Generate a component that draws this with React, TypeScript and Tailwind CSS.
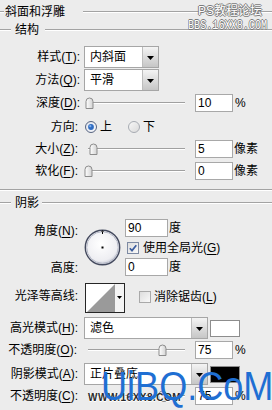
import React from "react";

const Etch = ({ className = "" }: { className?: string }) => (
  <div className={`h-[2px] border-t border-t-[#a3a3a3] border-b border-b-white ${className}`} />
);

function Lbl({ t, k, className = "" }: { t: string; k?: string; className?: string }) {
  return (
    <div className={`w-[80px] shrink-0 whitespace-nowrap text-right leading-[14px] ${className}`}>
      {t}
      {k ? (
        <>
          (<span className="underline decoration-1 underline-offset-[2px]">{k}</span>)
        </>
      ) : null}
      :
    </div>
  );
}

function Arrow() {
  return (
    <svg width="7" height="4" viewBox="0 0 7 4">
      <path d="M0 0H7L3.5 4Z" fill="#000" />
    </svg>
  );
}

function Select({ v, w }: { v: string; w: string }) {
  return (
    <div className={`ml-[4px] flex h-[22px] shrink-0 border border-[#a6a6a6] bg-white ${w}`}>
      <div className="flex-1 pl-[5px] leading-[20px]">{v}</div>
      <div className="flex w-[16px] items-center justify-center border-l border-l-[#bdbdbd] bg-linear-to-b from-[#f4f4f4] to-[#c6c6c6] pt-[2px]">
        <Arrow />
      </div>
    </div>
  );
}

function Num({ v, w = "w-[38px]" }: { v: string; w?: string }) {
  return (
    <div className={`h-[18px] shrink-0 border border-[#a8a8a8] bg-white pl-[2px] leading-[16px] ${w}`}>{v}</div>
  );
}

function Thumb() {
  return (
    <svg width="9" height="12" viewBox="0 0 9 12">
      <defs>
        <linearGradient id="thg" x1="0" y1="0" x2="1" y2="0">
          <stop offset="0" stopColor="#ffffff" />
          <stop offset="1" stopColor="#d2d2d2" />
        </linearGradient>
      </defs>
      <path d="M1 11.5V4.5A3.5 3.5 0 0 1 8 4.5V11.5Z" fill="url(#thg)" stroke="#8c8c8c" />
    </svg>
  );
}

function Slider({ pos }: { pos: number }) {
  return (
    <div className="relative ml-[4px] h-[18px] w-[101px] shrink-0">
      <div className="absolute left-[4px] right-0 top-[8px] h-[2px] border-t border-t-[#a0a0a0] border-b border-b-white" />
      <div className="absolute top-[3px] h-[12px] w-[9px]" style={{ left: pos }}>
        <Thumb />
      </div>
    </div>
  );
}

function Radio({ on, id }: { on: boolean; id: string }) {
  return (
    <svg width="12" height="12" viewBox="0 0 12 12" className="shrink-0">
      <defs>
        <linearGradient id={id} x1="0" y1="0" x2="1" y2="1">
          <stop offset="0" stopColor={on ? "#dfe4ee" : "#f8f8f8"} />
          <stop offset="1" stopColor={on ? "#f7f8fb" : "#d9d9d9"} />
        </linearGradient>
      </defs>
      <circle cx="6" cy="6" r="5.5" fill={`url(#${id})`} stroke={on ? "#56637f" : "#a7abb2"} />
      {on && <circle cx="6" cy="6" r="2.9" fill="#2f6cc2" />}
      {on && <circle cx="5.3" cy="5.2" r="1.1" fill="#7fb0ee" />}
    </svg>
  );
}

function Check({ on, id }: { on: boolean; id: string }) {
  return (
    <svg width="12" height="12" viewBox="0 0 12 12" className="shrink-0">
      <defs>
        <linearGradient id={id} x1="0" y1="0" x2="1" y2="1">
          <stop offset="0" stopColor="#dcdcdc" />
          <stop offset="1" stopColor="#fafafa" />
        </linearGradient>
      </defs>
      <rect x="0.5" y="0.5" width="11" height="11" fill={`url(#${id})`} stroke={on ? "#7d8aa3" : "#a9a9a9"} />
      {on && <path d="M2.8 6.2L5 8.6L9.3 3.3" fill="none" stroke="#3a5c9e" strokeWidth="1.7" />}
    </svg>
  );
}

function Dial() {
  return (
    <svg width="37" height="37" viewBox="0 0 37 37">
      <defs>
        <radialGradient id="dialg" cx="0.45" cy="0.4" r="0.6">
          <stop offset="0" stopColor="#ffffff" />
          <stop offset="0.8" stopColor="#eeeef2" />
          <stop offset="1" stopColor="#c9cbd6" />
        </radialGradient>
      </defs>
      <circle cx="18.5" cy="18.5" r="17.2" fill="url(#dialg)" stroke="#444a5e" strokeWidth="1.4" />
      <circle cx="18.5" cy="18.5" r="15.8" fill="none" stroke="#b7bbc9" strokeWidth="1" />
      <rect x="17.5" y="17.5" width="2" height="2" fill="#000" />
      <line x1="18.5" y1="1.5" x2="18.5" y2="5" stroke="#000" strokeWidth="1" />
      <line x1="17" y1="2.5" x2="20" y2="2.5" stroke="#555" strokeWidth="0.8" />
    </svg>
  );
}

function Contour() {
  return (
    <div className="ml-[5px] h-[30px] w-[40px] shrink-0 border border-[#262626] bg-white">
      <svg width="38" height="28" viewBox="0 0 38 28">
        <polygon points="1,28 29,0 29,28" fill="#9a9a9a" />
        <rect x="29" y="0" width="9" height="28" fill="#f4f4f4" />
        <path d="M31 12H36L33.5 15Z" fill="#000" />
      </svg>
    </div>
  );
}

function Swatch({ c }: { c: string }) {
  return <div className={`ml-[2px] h-[17px] w-[30px] shrink-0 border border-[#8d8d8d] ${c}`} />;
}

export default function App() {
  return (
    <div className="relative h-[410px] w-[272px] overflow-hidden bg-[#ececec] font-['Liberation_Sans','Noto_Sans_CJK_SC',sans-serif] text-[12px] text-black">
      {/* Title */}
      <div className="flex h-[24px] items-center">
        <Etch className="w-[4px]" />
        <span className="ml-[1px] leading-[14px]">斜面和浮雕</span>
        <Etch className="ml-[18px] flex-1" />
      </div>
      {/* 结构 */}
      <div className="flex h-[12px] items-center">
        <Etch className="w-[11px]" />
        <span className="ml-[4px] leading-[12px]">结构</span>
        <Etch className="ml-[6px] flex-1" />
      </div>

      <div className="mt-[10px] flex h-[22px] items-center">
        <Lbl t="样式" k="T" />
        <Select v="内斜面" w="w-[75px]" />
      </div>
      <div className="mt-[1px] flex h-[22px] items-center">
        <Lbl t="方法" k="Q" />
        <Select v="平滑" w="w-[75px]" />
      </div>
      <div className="mt-[1px] flex h-[22px] items-center">
        <Lbl t="深度" k="D" />
        <Slider pos={1} />
        <div className="ml-[10px]">
          <Num v="10" />
        </div>
        <span className="ml-[2px] leading-[14px]">%</span>
      </div>
      <div className="mt-[2px] flex h-[22px] items-center">
        <Lbl t="方向" className="pr-[2px]" />
        <div className="ml-[5px] flex items-center">
          <Radio on id="r1" />
          <span className="ml-[3px] leading-[14px]">上</span>
          <div className="ml-[16px]">
            <Radio on={false} id="r2" />
          </div>
          <span className="ml-[3px] leading-[14px]">下</span>
        </div>
      </div>
      <div className="flex h-[22px] items-center">
        <Lbl t="大小" k="Z" className="pr-[2px]" />
        <Slider pos={5} />
        <div className="ml-[10px]">
          <Num v="5" />
        </div>
        <span className="ml-[1px] leading-[14px]">像素</span>
      </div>
      <div className="flex h-[22px] items-center">
        <Lbl t="软化" k="F" className="pr-[2px]" />
        <Slider pos={0} />
        <div className="ml-[10px]">
          <Num v="0" />
        </div>
        <span className="ml-[1px] leading-[14px]">像素</span>
      </div>

      <Etch className="mt-[7px] w-full" />

      {/* 阴影 */}
      <div className="mt-[6px] flex h-[12px] items-center">
        <Etch className="w-[11px]" />
        <span className="ml-[4px] leading-[12px]">阴影</span>
        <Etch className="ml-[3px] flex-1" />
      </div>

      <div className="mt-[10px] flex items-start">
        <div className="w-[80px] shrink-0">
          <Lbl t="角度" k="N" className="mt-[5px] pr-[2px]" />
          <Lbl t="高度" className="mt-[23px] pr-[2px]" />
        </div>
        <div className="ml-[4px] mt-[10px] h-[37px] w-[37px] shrink-0">
          <Dial />
        </div>
        <div className="ml-[4px] flex flex-col">
          <div className="flex h-[18px] items-center">
            <Num v="90" w="w-[43px]" />
            <span className="ml-[1px] leading-[14px]">度</span>
          </div>
          <div className="mt-[4px] flex h-[14px] items-center pl-[2px]">
            <Check on id="c1" />
            <span className="ml-[4px] whitespace-nowrap leading-[14px]">
              使用全局光(<span className="underline decoration-1 underline-offset-[2px]">G</span>)
            </span>
          </div>
          <div className="mt-[3px] flex h-[18px] items-center">
            <Num v="0" w="w-[43px]" />
            <span className="ml-[1px] leading-[14px]">度</span>
          </div>
        </div>
      </div>

      <div className="mt-[7px] flex h-[30px] items-start">
        <Lbl t="光泽等高线" className="mt-[6px] pr-[2px]" />
        <Contour />
        <div className="ml-[14px] mt-[7px] flex items-center">
          <Check on={false} id="c2" />
          <span className="ml-[3px] whitespace-nowrap leading-[14px]">
            消除锯齿(<span className="underline decoration-1 underline-offset-[2px]">L</span>)
          </span>
        </div>
      </div>

      <div className="mt-[4px] flex h-[22px] items-center">
        <Lbl t="高光模式" k="H" className="pr-[2px]" />
        <Select v="滤色" w="w-[124px]" />
        <Swatch c="bg-white" />
      </div>
      <div className="mt-[2px] flex h-[18px] items-center">
        <Lbl t="不透明度" k="O" className="pr-[3px]" />
        <Slider pos={74} />
        <div className="ml-[10px]">
          <Num v="75" />
        </div>
        <span className="ml-[2px] leading-[14px]">%</span>
      </div>
      <div className="mt-[4px] flex h-[22px] items-center">
        <Lbl t="阴影模式" k="A" className="pr-[2px]" />
        <Select v="正片叠底" w="w-[124px]" />
        <Swatch c="bg-black" />
      </div>
      <div className="mt-[2px] flex h-[18px] items-center">
        <Lbl t="不透明度" k="C" className="pr-[2px]" />
        <Slider pos={74} />
        <div className="ml-[10px]">
          <Num v="75" />
        </div>
        <span className="ml-[2px] leading-[14px]">%</span>
      </div>

      {/* watermarks */}
      <div className="absolute left-[198px] top-[4px] leading-[14px] text-white [text-shadow:1px_0_#7a7a7a,-1px_0_#7a7a7a,0_1px_#7a7a7a,0_-1px_#7a7a7a]">
        PS教程论坛
      </div>
      <div className="absolute left-[188px] top-[19px] origin-left scale-x-[0.78] whitespace-nowrap font-['Liberation_Mono',monospace] text-[13px] leading-[13px] text-white [text-shadow:1px_0_#7a7a7a,-1px_0_#7a7a7a,0_1px_#7a7a7a,0_-1px_#7a7a7a]">
        BBS.16XX8.COM
      </div>
      <div className="absolute left-[88px] top-[392px] whitespace-nowrap text-[10px] font-bold leading-[12px] tracking-[0.5px] text-[#2a2a2a] [text-shadow:1px_0_#fff,0_1px_#fff]">
        WWW.16XX8.COM
      </div>
      <div className="absolute left-[101px] top-[366px] origin-left scale-x-[0.88] whitespace-nowrap text-[41px] leading-[41px] text-[#1f6fd3]">
        UiBQ.CoM
      </div>
    </div>
  );
}
